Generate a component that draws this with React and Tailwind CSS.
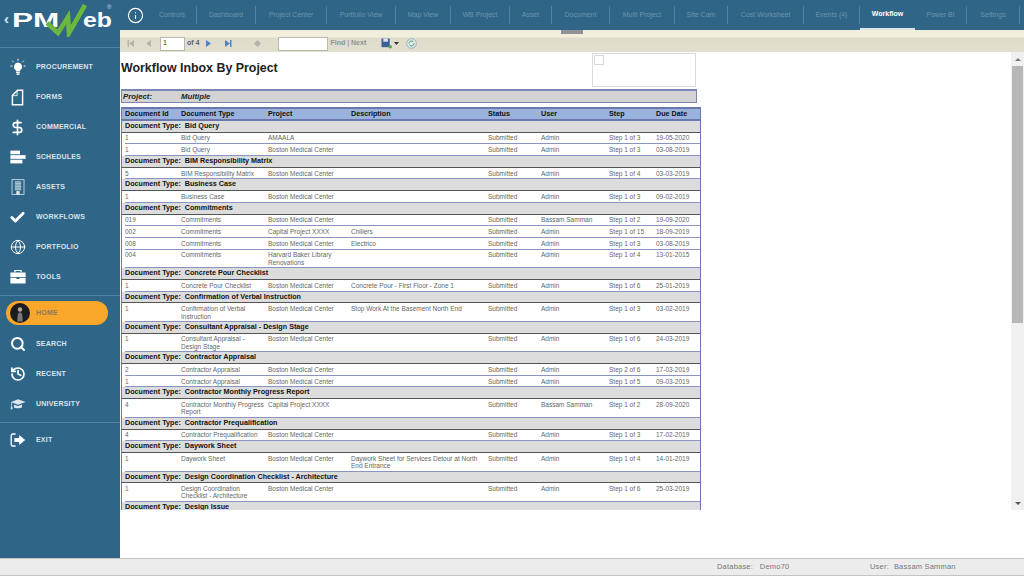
import React from "react";
import { Info, DollarSign, Globe, Search, History, Check } from "lucide-react";

const Bulb = () => (
  <svg width="18" height="18" viewBox="0 0 20 20" fill="#fff">
    <path d="M10 5a4.6 4.6 0 0 0-3 8c.6.6.8 1.2.8 1.6h4.4c0-.4.2-1 .8-1.6a4.6 4.6 0 0 0-3-8z" />
    <rect x="7.9" y="15.2" width="4.2" height="1.4" />
    <rect x="8.3" y="17.1" width="3.4" height="1.6" />
    <path d="M10 .8v2.4M3.6 3l1.7 1.7M16.4 3l-1.7 1.7M1.6 9h2.2M16.2 9h2.2" stroke="#fff" strokeWidth="1" />
  </svg>
);
const Doc = () => (
  <svg width="17" height="17" viewBox="0 0 20 20" fill="none" stroke="#fff" strokeWidth="1.7">
    <path d="M10 1.5h6v17H4V7.5z" />
    <path d="M9.6 2v5.8H4.2" strokeWidth="1" />
  </svg>
);
const Bars = () => (
  <svg width="16" height="16" viewBox="0 0 20 20" fill="#fff">
    <rect x="0.5" y="2" width="12" height="4.6" />
    <rect x="0.5" y="7.7" width="19" height="4.6" />
    <rect x="0.5" y="13.4" width="15" height="4.6" />
  </svg>
);
const Tower = () => (
  <svg width="16" height="16" viewBox="0 0 20 20" fill="none" stroke="#dbe6ee" strokeWidth="1">
    <rect x="2.5" y="0.8" width="15" height="18.4" />
    <path d="M6 3.5h8M6 5.5h8M6 7.5h8M6 9.5h8M6 11.5h8M6 13.5h8M7.5 3v11M10 3v11M12.5 3v11" strokeWidth="0.8" />
    <rect x="8.5" y="15.5" width="3" height="3.5" fill="#dbe6ee" />
  </svg>
);
const Case = () => (
  <svg width="16" height="16" viewBox="0 0 20 20" fill="#fff">
    <path d="M7 4V2.5h6V4h1.6V1.4H5.4V4z" />
    <path d="M.5 4.5h19v5.4H.5zM.5 11h7.6v1.4h3.8V11h7.6v7H.5z" />
  </svg>
);
const Cap = () => (
  <svg width="16" height="16" viewBox="0 0 20 20" fill="#dbe6ee">
    <path d="M10 4 19.5 7.4 10 10.8 2.6 8.2V14H1.6V7.6z" />
    <path d="M5 11v3.4c1.4 1.2 7.6 1.2 10 0V10.6l-5 1.8z" />
    <rect x="1" y="14" width="2.2" height="2.6" />
  </svg>
);
const ExitIcon = () => (
  <svg width="16" height="16" viewBox="0 0 20 20" fill="none">
    <path d="M7 2.5H3.5a2 2 0 0 0-2 2v11a2 2 0 0 0 2 2H7" stroke="#fff" strokeWidth="1.6" />
    <path d="M5.5 7.5h6V3.6l7.5 6.4-7.5 6.4v-3.9h-6z" fill="#fff" />
  </svg>
);
const Avatar = () => (
  <svg width="20" height="20" viewBox="0 0 20 20" className="shrink-0">
    <circle cx="10" cy="10" r="10" fill="#1c1c1f" />
    <circle cx="10" cy="6.5" r="2.2" fill="#b9aa98" />
    <path d="M7.4 18.5c0-5.6.3-9.2 2.6-9.2s2.6 3.6 2.6 9.2z" fill="#77797c" />
  </svg>
);

const navTop = [
  { label: "PROCUREMENT", icon: <Bulb /> },
  { label: "FORMS", icon: <Doc /> },
  { label: "COMMERCIAL", icon: <DollarSign size={17} strokeWidth={2.4} color="#fff" /> },
  { label: "SCHEDULES", icon: <Bars /> },
  { label: "ASSETS", icon: <Tower /> },
  { label: "WORKFLOWS", icon: <Check size={17} strokeWidth={4} color="#fff" /> },
  { label: "PORTFOLIO", icon: <Globe size={16} strokeWidth={1.5} color="#fff" /> },
  { label: "TOOLS", icon: <Case /> },
];

const navBottom = [
  { label: "SEARCH", icon: <Search size={16} strokeWidth={3} color="#fff" /> },
  { label: "RECENT", icon: <History size={16} strokeWidth={2.6} color="#fff" /> },
  { label: "UNIVERSITY", icon: <Cap /> },
];

const tabs = [
  ["Controls", 49],
  ["Dashboard", 59],
  ["Project Center", 71],
  ["Portfolio View", 69],
  ["Map View", 55],
  ["WB Project", 59],
  ["Asset", 42],
  ["Document", 58],
  ["Multi Project", 65],
  ["Site Cam", 53],
  ["Cost Worksheet", 76],
  ["Events (4)", 56],
  ["Workflow", 55],
  ["Power BI", 52],
  ["Settings", 53],
];

// g = group header, anything else is a data row
const report = [
  { g: "Bid Query" },
  ["1", "Bid Query", "AMAALA", "", "Submitted", "Admin", "Step 1 of 3", "19-05-2020"],
  ["1", "Bid Query", "Boston Medical Center", "", "Submitted", "Admin", "Step 1 of 3", "03-08-2019"],
  { g: "BIM Responsibility Matrix" },
  ["5", "BIM Responsibility Matrix", "Boston Medical Center", "", "Submitted", "Admin", "Step 1 of 4", "03-03-2019"],
  { g: "Business Case" },
  ["1", "Business Case", "Boston Medical Center", "", "Submitted", "Admin", "Step 1 of 3", "09-02-2019"],
  { g: "Commitments" },
  ["019", "Commitments", "Boston Medical Center", "", "Submitted", "Bassam Samman", "Step 1 of 2", "19-09-2020"],
  ["002", "Commitments", "Capital Project XXXX", "Chillers", "Submitted", "Admin", "Step 1 of 15", "18-09-2019"],
  ["008", "Commitments", "Boston Medical Center", "Electrico", "Submitted", "Admin", "Step 1 of 3", "03-08-2019"],
  ["004", "Commitments", "Harvard Baker Library Renovations", "", "Submitted", "Admin", "Step 1 of 4", "13-01-2015"],
  { g: "Concrete Pour Checklist" },
  ["1", "Concrete Pour Checklist", "Boston Medical Center", "Concrete Pour - First Floor - Zone 1", "Submitted", "Admin", "Step 1 of 6", "25-01-2019"],
  { g: "Confirmation of Verbal Instruction" },
  ["1", "Confirmation of Verbal Instruction", "Boston Medical Center", "Stop Work At the Basement North End", "Submitted", "Admin", "Step 1 of 3", "03-02-2019"],
  { g: "Consultant Appraisal - Design Stage" },
  ["1", "Consultant Appraisal - Design Stage", "Boston Medical Center", "", "Submitted", "Admin", "Step 1 of 6", "24-03-2019"],
  { g: "Contractor Appraisal" },
  ["2", "Contractor Appraisal", "Boston Medical Center", "", "Submitted", "Admin", "Step 2 of 6", "17-03-2019"],
  ["1", "Contractor Appraisal", "Boston Medical Center", "", "Submitted", "Admin", "Step 1 of 5", "09-03-2019"],
  { g: "Contractor Monthly Progress Report" },
  ["4", "Contractor Monthly Progress Report", "Capital Project XXXX", "", "Submitted", "Bassam Samman", "Step 1 of 2", "28-09-2020"],
  { g: "Contractor Prequalification" },
  ["4", "Contractor Prequalification", "Boston Medical Center", "", "Submitted", "Admin", "Step 1 of 3", "17-02-2019"],
  { g: "Daywork Sheet" },
  ["1", "Daywork Sheet", "Boston Medical Center", "Daywork Sheet for Services Detour at North End Entrance", "Submitted", "Admin", "Step 1 of 4", "14-01-2019"],
  { g: "Design Coordination Checklist - Architecture" },
  ["1", "Design Coordination Checklist - Architecture", "Boston Medical Center", "", "Submitted", "Admin", "Step 1 of 6", "25-03-2019"],
  { g: "Design Issue" },
];

const columns = ["Document Id", "Document Type", "Project", "Description", "Status", "User", "Step", "Due Date"];
const rowGrid = "grid grid-cols-[56px_87px_83px_137px_53px_68px_47px_45px]";

function NavItem({ label, icon }) {
  return (
    <div className="flex h-[30px] items-center">
      <div className="flex w-[35px] shrink-0 justify-center">{icon}</div>
      <span className="ml-[1px] text-[7px] font-bold tracking-[0.2px] text-[#d7e2ea]">{label}</span>
    </div>
  );
}

function Sidebar() {
  return (
    <aside className="flex w-[120px] shrink-0 flex-col bg-[#2f6688]">
      <div className="relative h-[48px] shrink-0 overflow-hidden border-b border-[#4f83a3]">
        <span className="absolute left-[4px] top-[10px] text-[15px] font-bold leading-[18px] text-[#dfe8ee]">‹</span>
        <span className="absolute left-[12px] top-[8px] origin-left scale-x-[1.5] text-[21px] font-bold leading-[24px] text-white">PM</span>
        <svg width="42" height="34" viewBox="0 0 42 34" className="absolute left-[46px] top-[3px]" fill="none" stroke="#6cb83f" strokeWidth="4.6" strokeLinejoin="miter">
          <path d="M1 20 12 30 22 14 23 30 39 2" />
        </svg>
        <span className="absolute left-[83px] top-[8px] origin-left scale-x-[1.18] text-[21px] font-bold leading-[24px] text-white">eb</span>
        <span className="absolute left-[107px] top-[3px] text-[6px] leading-[8px] text-[#cfdce5]">®</span>
      </div>
      <nav className="flex flex-col border-b border-[#4f83a3] pt-[4px] pb-[3px]">
        {navTop.map((item) => (
          <NavItem key={item.label} {...item} />
        ))}
      </nav>
      <div className="mx-[6px] mt-[5px] mb-[4px] flex h-[24px] w-[102px] items-center gap-[6px] rounded-full bg-[#f9a72b] pl-[4px]">
        <Avatar />
        <span className="text-[7px] font-bold tracking-[0.2px] text-[#8c7a58]">HOME</span>
      </div>
      <div className="flex flex-col border-b border-[#4f83a3] pb-[3px]">
        {navBottom.map((item) => (
          <NavItem key={item.label} {...item} />
        ))}
      </div>
      <div className="pt-[2px]">
        <NavItem label="EXIT" icon={<ExitIcon />} />
      </div>
    </aside>
  );
}

function TopTabs() {
  return (
    <div className="flex h-[30px] shrink-0 items-stretch bg-[#2f6688] pl-[16px]">
      <div className="flex w-[12px] items-center">
        <Info size={17} strokeWidth={1.6} color="#fff" className="shrink-0 -ml-[9px]" />
      </div>
      <div className="flex flex-1 items-stretch">
        {tabs.map(([name, w]) => {
          const active = name === "Workflow";
          return (
            <div
              key={name}
              style={{ width: w }}
              className={`flex shrink-0 items-center justify-center ${active ? "border-b-2 border-[#dfe6ea]" : ""}`}
            >
              <span
                className={`flex h-[18px] w-full items-center justify-center text-[7px] ${
                  active ? "font-bold text-white" : "border-r border-[#4f83a3] text-[#6c92aa]"
                }`}
              >
                {name}
              </span>
            </div>
          );
        })}
      </div>
    </div>
  );
}

const Tri = ({ dir = "r", color = "#b4b4aa", bar }) => (
  <svg width="9" height="9" viewBox="0 0 9 9" fill={color}>
    <path d={dir === "r" ? "M2 1l5 3.5L2 8z" : "M7 1L2 4.5 7 8z"} />
    {bar && <rect x={dir === "r" ? 7 : 0.5} y="1" width="1.5" height="7" />}
  </svg>
);

function ReportToolbar() {
  return (
    <div className="relative flex h-[22px] shrink-0 items-center bg-[linear-gradient(#f1eedb_0px,#f1eedb_7px,#e0dccc_8px,#e3dfcf_22px)] pl-[7px] pt-[5px] text-[7px] text-[#55606a]">
      <div className="absolute left-[441px] top-0 h-[4px] w-[22px] bg-[#8f9398]" />
      <Tri dir="l" bar />
      <div className="ml-[8px]"><Tri dir="l" /></div>
      <div className="ml-[7px] flex h-[14px] w-[25px] items-center border border-[#b9b9b0] bg-white pl-[2px] text-[7px] text-[#333]">1</div>
      <span className="ml-[2px] font-bold">of 4</span>
      <div className="ml-[5px]"><Tri color="#4a86c5" /></div>
      <div className="ml-[10px]"><Tri color="#4a86c5" bar /></div>
      <svg width="7" height="7" viewBox="0 0 8 8" className="ml-[22px]" fill="#b4b4aa"><path d="M4 0l4 4-4 4-4-4z" /></svg>
      <div className="ml-[17px] h-[14px] w-[50px] border border-[#b9b9b0] bg-white" />
      <span className="ml-[2px] font-bold text-[#8e918c]">Find</span>
      <span className="mx-[2px] text-[#777]">|</span>
      <span className="font-bold text-[#8e918c]">Next</span>
      <svg width="12" height="11" viewBox="0 0 13 12" className="ml-[15px]">
        <rect x="0.5" y="0.5" width="9" height="9.5" fill="#3c5f9c" />
        <rect x="2.5" y="0.5" width="5" height="3.5" fill="#dfe6f2" />
        <circle cx="10" cy="9.5" r="2" fill="#55a84a" />
      </svg>
      <svg width="5" height="3" viewBox="0 0 5 3" className="ml-[1px]" fill="#333"><path d="M0 0h5L2.5 3z" /></svg>
      <svg width="11" height="11" viewBox="0 0 11 11" className="ml-[7px]" fill="none">
        <circle cx="5.5" cy="5.5" r="4.8" fill="#dfe8ee" stroke="#8aa5bd" strokeWidth="0.8" />
        <path d="M3 5.5a2.5 2.5 0 0 1 4.4-1.6M8 5.5a2.5 2.5 0 0 1-4.4 1.6" stroke="#4fa04a" strokeWidth="1" />
      </svg>
    </div>
  );
}

function ReportRow({ row }) {
  const tall = row[1].length > 27 || row[2].length > 25 || row[3].length > 40;
  return (
    <div className={`${rowGrid} ${tall ? "h-[18.7px]" : "h-[11.7px]"} border-b border-[#8a93c2] bg-white pt-[1.8px] text-[6.5px] leading-[7.4px] text-[#666]`}>
      {row.map((cell, i) => (
        <div key={i} className={i === 1 || i === 2 ? "pr-[4px]" : "pr-[2px]"}>{cell}</div>
      ))}
    </div>
  );
}

function Report() {
  return (
    <div className="min-w-0 flex-1 overflow-hidden bg-white pl-[1px] pt-[1px]">
      <div className="flex h-[36px] w-[575px] justify-between">
        <h1 className="pt-[7px] text-[12.4px] font-bold leading-[16px] text-[#222]">Workflow Inbox By Project</h1>
        <div className="h-[34px] w-[104px] border border-[#dcdcdc] p-[1px]">
          <div className="size-[10px] border border-[#d8d8d8]" />
        </div>
      </div>
      <div className="flex h-[14px] w-[576px] items-center border border-t-2 border-[#7c86b4] bg-[#d3d3d3] pl-[1px] text-[7.8px] font-bold italic text-[#222]">
        <span className="w-[58px]">Project:</span>
        <span>Multiple</span>
      </div>
      <div className="mt-[4px] w-[580px] border-x border-[#6a78ad]">
        <div className={`${rowGrid} h-[14px] items-center border-y-2 border-[#6a78ad] bg-[#9ab3dd] pl-[3px] text-[7.2px] font-bold text-[#111]`}>
          {columns.map((c) => (
            <div key={c}>{c}</div>
          ))}
        </div>
        {report.map((row, i) =>
          row.g ? (
            <div key={i} className="flex h-[11.7px] items-center gap-[4px] border-b border-[#555] bg-[#dcdcdc] pl-[3px] text-[7.2px] font-bold text-[#111]">
              <span>Document Type:</span>
              <span>{row.g}</span>
            </div>
          ) : (
            <div key={i} className="pl-[3px] bg-white">
              <ReportRow row={row} />
            </div>
          )
        )}
      </div>
    </div>
  );
}

function Scrollbar() {
  return (
    <div className="flex w-[13px] shrink-0 flex-col items-center bg-[#f0f0f0]">
      <div className="flex h-[14px] items-center">
        <div className="h-0 w-0 border-x-[3px] border-b-[3px] border-x-transparent border-b-[#777]" />
      </div>
      <div className="h-[257px] w-[11px] bg-[#b7b7b7]" />
      <div className="mt-auto flex h-[14px] items-center">
        <div className="h-0 w-0 border-x-[3px] border-t-[3px] border-x-transparent border-t-[#555]" />
      </div>
    </div>
  );
}

export default function App() {
  return (
    <div className="flex h-[576px] w-[1024px] flex-col overflow-hidden bg-white font-['Liberation_Sans',Arial,sans-serif]">
      <div className="flex min-h-0 flex-1">
        <Sidebar />
        <div className="flex min-w-0 flex-1 flex-col">
          <TopTabs />
          <ReportToolbar />
          <div className="flex h-[458px] shrink-0">
            <Report />
            <Scrollbar />
          </div>
        </div>
      </div>
      <footer className="flex h-[18px] shrink-0 items-center border-y border-[#c3c3c3] bg-[#ececec] text-[7.5px] tracking-[0.2px] text-[#777]">
        <span className="ml-[717px] w-[153px]">Database:&nbsp;&nbsp; Demo70</span>
        <span>User:</span>
        <span className="ml-[5px]">Bassam Samman</span>
      </footer>
    </div>
  );
}
